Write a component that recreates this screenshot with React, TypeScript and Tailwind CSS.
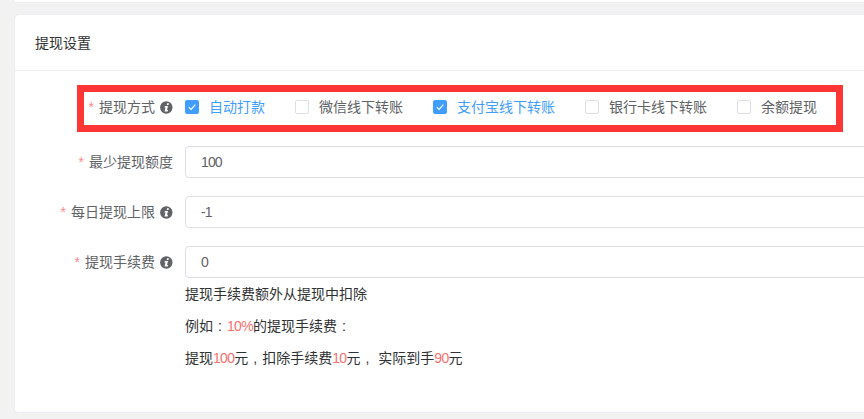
import React from "react";

const InfoIcon = () => (
  <svg width="13" height="13" viewBox="0 0 13 13" className="ml-[5px] shrink-0">
    <circle cx="6.3" cy="6.5" r="6.2" fill="#606266" />
    <path d="M7.1 2.3h1.8l-.4 1.7H6.7zM4.8 5.1h3.2l-1 3.9h1l-.3 1.4H4.5l1-3.9H4.5z" fill="#fff" />
  </svg>
);

// full width punctuation sits in the middle of its cell in the reference
const Punct = ({ children }: { children: React.ReactNode }) => (
  <span className="inline-block w-[14px] text-center">{children}</span>
);

const Red = ({ children }: { children: React.ReactNode }) => (
  <span className="tracking-[-0.7px] text-[#fb6f6f]">{children}</span>
);

const Check = ({ label, checked }: { label: string; checked?: boolean }) => (
  <label className={"mr-[30px] flex items-center " + (checked ? "text-[#409eff]" : "text-[#606266]")}>
    <span
      className={
        "flex h-[14px] w-[14px] items-center justify-center rounded-[2px] border " +
        (checked ? "border-[#409eff] bg-[#409eff]" : "border-[#dcdfe6] bg-white")
      }
    >
      {checked && (
        <svg width="10" height="10" viewBox="0 0 10 10">
          <path d="M1.8 5.2l2.3 2.2 4.2-4.8" fill="none" stroke="#fff" strokeWidth="1.1" />
        </svg>
      )}
    </span>
    <span className="ml-[10px]">{label}</span>
  </label>
);

const Label = ({ text, info }: { text: string; info?: boolean }) => (
  <div className="flex w-[170px] shrink-0 items-center justify-end pr-[12px] text-[#606266]">
    <span className="mr-[5px] text-[#fb8a8a]">*</span>
    {text}
    {info && <InfoIcon />}
  </div>
);

const Field = ({ label, value, info, className }: { label: string; value: string; info?: boolean; className: string }) => (
  <div className={"flex h-8 items-center " + className}>
    <Label text={label} info={info} />
    <div className="flex h-8 w-[800px] shrink-0 items-center rounded-[4px] border border-[#dcdfe6] bg-white px-[15px] tracking-[-0.9px] text-[#606266]">
      {value}
    </div>
  </div>
);

export default function App() {
  return (
    <div className="h-[419px] w-[864px] overflow-hidden bg-[#f2f2f3] pl-[15px] font-['Liberation_Sans','Noto_Sans_CJK_SC',sans-serif] text-[14px]">
      <div className="h-[3px] w-[860px] border-b border-[#ebeef5] bg-white" />
      <div className="mt-[12px] h-[397px] w-[860px] rounded-[4px] bg-white shadow-[0_0_0_1px_#ebeef5]">
        <div className="flex h-[56px] items-center border-b border-[#ebeef5] pl-[20px] pt-[1px] text-[#303133]">提现设置</div>
        <div className="relative mt-[20px] flex h-8 items-center">
          <Label text="提现方式" info />
          <Check label="自动打款" checked />
          <Check label="微信线下转账" />
          <Check label="支付宝线下转账" checked />
          <Check label="银行卡线下转账" />
          <Check label="余额提现" />
          <div className="absolute left-[62px] top-[-6px] h-[47px] w-[766px] border-[7px] border-[#ff3636]" />
        </div>
        <Field label="最少提现额度" value="100" className="mt-[23px]" />
        <Field label="每日提现上限" value="-1" info className="mt-[18px]" />
        <Field label="提现手续费" value="0" info className="mt-[18px]" />
        <div className="ml-[170px] leading-8 text-[#303133]">
          <p>提现手续费额外从提现中扣除</p>
          <p>
            例如<Punct>:</Punct>
            <Red>10%</Red>的提现手续费<Punct>:</Punct>
          </p>
          <p>
            提现<Red>100</Red>元<Punct>,</Punct>扣除手续费<Red>10</Red>元<Punct>,</Punct> 实际到手<Red>90</Red>元
          </p>
        </div>
      </div>
    </div>
  );
}
